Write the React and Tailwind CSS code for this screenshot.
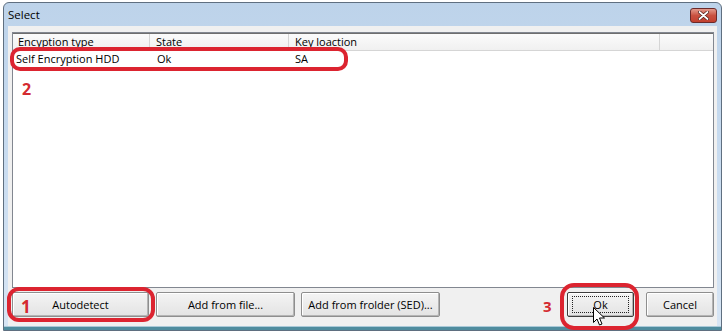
import React from 'react';

const font = "font-['Segoe_UI','Open_Sans',sans-serif]";

function WinButton({ label, width, focused }) {
  return (
    <div
      className={`h-[25px] flex items-center justify-center rounded-[2px] border ${
        focused ? 'border-[#3c3c3c]' : 'border-[#8e8e8e]'
      } bg-gradient-to-b from-[#f4f4f4] to-[#e3e3e3] shadow-[inset_-1px_-1px_0_#b4b4b4,inset_1px_1px_0_#ffffff] text-[11px] leading-[15px] text-black`}
      style={{ width }}
    >
      {focused ? (
        <div className="h-[17px] w-[calc(100%-8px)] border border-dotted border-[#222] flex items-center justify-center">
          {label}
        </div>
      ) : (
        label
      )}
    </div>
  );
}

export default function App() {
  return (
    <div className={`relative w-[724px] h-[331px] overflow-hidden bg-white ${font}`}>
      {/* window */}
      <div className="ml-[3px] mt-[2px] w-[719px] h-[329px] flex flex-col border border-[#5f6f80] rounded-t-[6px] bg-gradient-to-b from-[#bdd3ea] via-[#c9dcf0] to-[#d7e5f4]">
        {/* title bar */}
        <div className="h-[23px] flex items-start justify-between pl-[4px] pr-[4px]">
          <span className="mt-[4px] text-[11.5px] leading-[15px] text-black">Select</span>
          <div className="mt-[5px] w-[27px] h-[15px] rounded-[3px] border border-[#6b2a2a] bg-gradient-to-b from-[#e39a8c] via-[#c95140] to-[#c2402f] flex items-center justify-center">
            <svg width="11" height="9" viewBox="0 0 11 9">
              <path d="M1.5 1 L9.5 8 M9.5 1 L1.5 8" stroke="#4a1a14" strokeWidth="3.2" strokeLinecap="round" />
              <path d="M1.5 1 L9.5 8 M9.5 1 L1.5 8" stroke="#ffffff" strokeWidth="1.8" strokeLinecap="round" />
            </svg>
          </div>
        </div>

        {/* client area */}
        <div className="flex-1 mx-[4px] bg-[#f0f0f0] flex flex-col pt-[6px] pl-[4px] pr-[3px] pb-[8px]">
          <div className="h-[256px] border border-[#828790] bg-white flex flex-col">
            <div className="h-[18px] flex border-t border-t-[#6e6e6e] border-b border-b-[#d5d5d5] bg-gradient-to-b from-[#fbfbfb] to-[#f0f0f0] text-[11px] text-black">
              <div className="w-[137px] pl-[5px] flex items-center border-r border-[#d5d5d5]">Encyption type</div>
              <div className="w-[139px] pl-[6px] flex items-center border-r border-[#d5d5d5]">State</div>
              <div className="w-[371px] pl-[6px] flex items-center border-r border-[#d5d5d5]">Key loaction</div>
              <div className="flex-1" />
            </div>
            <div className="h-[17px] flex text-[11px] text-black">
              <div className="w-[137px] pl-[3px] flex items-center">Self Encryption HDD</div>
              <div className="w-[139px] pl-[7px] flex items-center">Ok</div>
              <div className="w-[371px] pl-[6px] flex items-center">SA</div>
            </div>
          </div>

          <div className="mt-[4px] flex items-center">
            <WinButton label="Autodetect" width={137} />
            <div className="ml-[7px]">
              <WinButton label="Add from file..." width={139} />
            </div>
            <div className="ml-[6px]">
              <WinButton label="Add from frolder (SED)..." width={139} />
            </div>
            <div className="ml-auto">
              <WinButton label="Ok" width={67} focused />
            </div>
            <div className="ml-[12px]">
              <WinButton label="Cancel" width={68} />
            </div>
          </div>
        </div>

        {/* bottom frame */}
        <div className="h-[4px] border-t border-[#a9c9d8] bg-[#4f8c9e]" />
      </div>

      {/* annotations */}
      <div className="absolute left-[10px] top-[47px] w-[338px] h-[24px] rounded-[10px] border-[4px] border-[#dc2430]" />
      <span className="absolute left-[22px] top-[77px] text-[16px] font-bold text-[#d42a30]">2</span>

      <div className="absolute left-[7px] top-[287px] w-[148px] h-[35px] rounded-[12px] border-[4px] border-[#dc2430]" />
      <span className="absolute left-[21px] top-[294px] text-[17px] font-bold text-[#d42a30]">1</span>

      <div className="absolute left-[560px] top-[283px] w-[79px] h-[47px] rounded-[14px] border-[4px] border-[#dc2430]" />
      <span className="absolute left-[543px] top-[295px] text-[15px] font-bold text-[#d42a30]">3</span>

      {/* mouse cursor */}
      <svg className="absolute left-[593px] top-[307px]" width="13" height="20" viewBox="0 0 13 20">
        <path d="M0.5 0.5 L0.5 15.5 L4 12 L6.5 18 L9 17 L6.5 11 L11.5 11 Z" fill="#ffffff" stroke="#000000" strokeWidth="1" strokeLinejoin="miter" />
      </svg>
    </div>
  );
}
